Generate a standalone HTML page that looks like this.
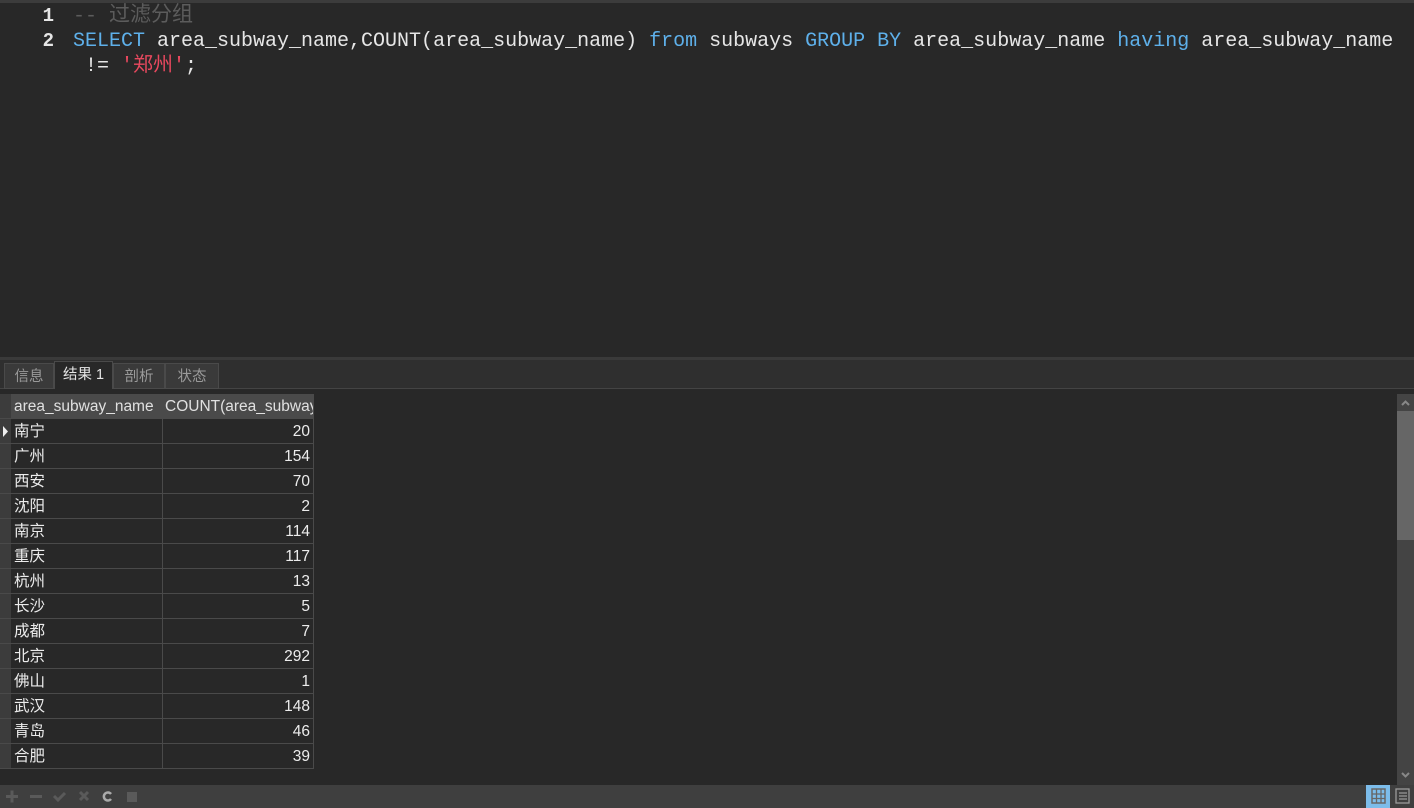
<!DOCTYPE html>
<html><head><meta charset="utf-8"><style>
*{margin:0;padding:0;box-sizing:border-box}
body{width:1414px;height:808px;background:#282828;overflow:hidden;position:relative;font-family:"Liberation Sans","Noto Sans CJK SC",sans-serif}
.top{position:absolute;left:0;top:0;width:1414px;height:3px;background:#3c3c3c}
.code{position:absolute;font-family:"Liberation Mono","Noto Sans CJK SC",monospace;font-size:20px;line-height:25px;color:#e6e6e6;white-space:pre}
.ln{position:absolute;left:36px;width:18px;text-align:right;font-family:"Liberation Mono",monospace;font-size:19px;font-weight:bold;color:#e6e6e6}
.kw{color:#5eb0ea}.cm{color:#5c5c5c}.st{color:#e8485e}
.div{position:absolute;left:0;top:357px;width:1414px;height:3px;background:#3a3a3a}
.tabbar{position:absolute;left:0;top:360px;width:1414px;height:29px;background:#2f2f2f;border-bottom:1px solid #444}
.tab{position:absolute;top:3px;height:26px;background:#3a3a3a;border:1px solid #4a4a4a;color:#9a9a9a;font-size:14.5px;line-height:26px;text-align:center}
.tab.a{background:#282828;color:#e6e6e6;top:1px;height:28px;border-bottom:none}
.grid{position:absolute;left:0;top:394px}
.row{position:absolute;left:0;height:25px;width:314px}
.ind{position:absolute;left:0;width:11px;height:25px;background:#3c3c3c;border-bottom:1px solid #4a4a4a}
.c1,.c2{position:absolute;height:25px;border-right:1px solid #4a4a4a;border-bottom:1px solid #4a4a4a;color:#ececec;font-size:15.5px;line-height:26px;overflow:hidden;white-space:nowrap}
.c1{left:11px;width:152px;padding-left:3px}
.c2{left:163px;width:151px;padding-right:3px;text-align:right}
.hd .c1,.hd .c2{background:#4a4a4a;color:#e0e0e0;text-align:left}
.hd .c2{padding-left:2px}
.sb{position:absolute;left:1397px;top:394px;width:17px;height:391px;background:#444}
.thumb{position:absolute;left:1397px;top:411px;width:17px;height:129px;background:#666}
.bot{position:absolute;left:0;top:785px;width:1414px;height:23px;background:#3f3f3f}
</style></head><body>
<div class="top"></div>
<div class="ln" style="top:5px">1</div>
<div class="ln" style="top:30px">2</div>
<div class="code" style="left:73px;top:4px"><span class="cm">-- <span style="font-size:21px">过滤分组</span></span></div>
<div class="code" style="left:73px;top:29px"><span class="kw">SELECT</span> area_subway_name,COUNT(area_subway_name) <span class="kw">from</span> subways <span class="kw">GROUP BY</span> area_subway_name <span class="kw">having</span> area_subway_name</div>
<div class="code" style="left:73px;top:54px"> != <span class="st">'郑州'</span>;</div>
<div class="div"></div>
<div class="tabbar">
<div class="tab" style="left:4px;width:50px">信息</div>
<div class="tab a" style="left:54px;width:59px">结果 1</div>
<div class="tab" style="left:113px;width:52px">剖析</div>
<div class="tab" style="left:165px;width:54px">状态</div>
</div>
<div class="grid">
<div class="row hd" style="top:0"><div class="ind"></div><div class="c1">area_subway_name</div><div class="c2">COUNT(area_subway_name)</div></div>
<div class="row" style="top:25px"><div class="ind"><svg width="11" height="25"><path d="M3 7 L8 12.5 L3 18Z" fill="#eee"/></svg></div><div class="c1">南宁</div><div class="c2">20</div></div>
<div class="row" style="top:50px"><div class="ind"></div><div class="c1">广州</div><div class="c2">154</div></div>
<div class="row" style="top:75px"><div class="ind"></div><div class="c1">西安</div><div class="c2">70</div></div>
<div class="row" style="top:100px"><div class="ind"></div><div class="c1">沈阳</div><div class="c2">2</div></div>
<div class="row" style="top:125px"><div class="ind"></div><div class="c1">南京</div><div class="c2">114</div></div>
<div class="row" style="top:150px"><div class="ind"></div><div class="c1">重庆</div><div class="c2">117</div></div>
<div class="row" style="top:175px"><div class="ind"></div><div class="c1">杭州</div><div class="c2">13</div></div>
<div class="row" style="top:200px"><div class="ind"></div><div class="c1">长沙</div><div class="c2">5</div></div>
<div class="row" style="top:225px"><div class="ind"></div><div class="c1">成都</div><div class="c2">7</div></div>
<div class="row" style="top:250px"><div class="ind"></div><div class="c1">北京</div><div class="c2">292</div></div>
<div class="row" style="top:275px"><div class="ind"></div><div class="c1">佛山</div><div class="c2">1</div></div>
<div class="row" style="top:300px"><div class="ind"></div><div class="c1">武汉</div><div class="c2">148</div></div>
<div class="row" style="top:325px"><div class="ind"></div><div class="c1">青岛</div><div class="c2">46</div></div>
<div class="row" style="top:350px"><div class="ind"></div><div class="c1">合肥</div><div class="c2">39</div></div>
</div>
<div class="sb"></div><div class="thumb"></div>
<svg style="position:absolute;left:1397px;top:394px" width="17" height="391"><path d="M5 11 L8.5 7.5 L12 11" stroke="#888" stroke-width="2" fill="none"/><path d="M5 379 L8.5 382.5 L12 379" stroke="#888" stroke-width="2" fill="none"/></svg>
<div class="bot">
<svg width="160" height="23" style="position:absolute;left:0;top:0">
<path d="M6 11.5h12M12 5.5v12" stroke="#5a5a5a" stroke-width="3"/>
<path d="M30 11.5h12" stroke="#5a5a5a" stroke-width="3"/>
<path d="M54 11l4 4 7-7" stroke="#5a5a5a" stroke-width="3" fill="none"/>
<path d="M80 7l8 8M88 7l-8 8" stroke="#5a5a5a" stroke-width="3"/>
<path d="M111 9a4 4 0 1 0 0 5" stroke="#aaa" stroke-width="2.5" fill="none"/>
<rect x="127" y="7" width="10" height="10" fill="#5a5a5a"/>
</svg>
<div style="position:absolute;left:1366px;top:0;width:24px;height:23px;background:#7cbcea"></div>
<svg style="position:absolute;left:1366px;top:0" width="48" height="23"><rect x="6" y="4" width="13" height="14" fill="none" stroke="#666" stroke-width="1.5"/><path d="M6 9h13M6 13.5h13M10.5 4v14M15 4v14" stroke="#666" stroke-width="1.3"/><rect x="30" y="4" width="13" height="14" fill="none" stroke="#999" stroke-width="1.3"/><path d="M33 8h8M33 11h8M33 14h8" stroke="#999" stroke-width="1.2"/></svg>
</div>
</body></html>
